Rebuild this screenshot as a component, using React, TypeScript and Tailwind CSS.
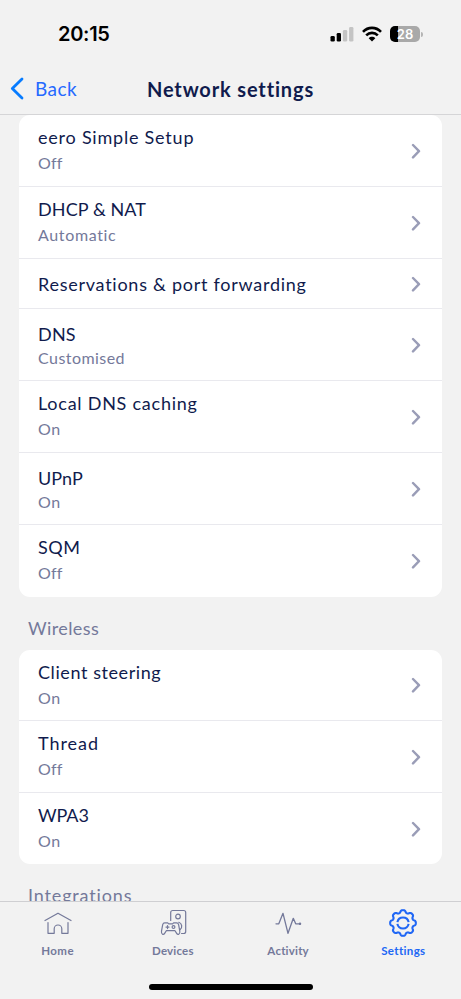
import type { ReactNode } from "react"
import { clsx } from "clsx"

interface Setting {
  title: string
  value?: string
  titleClass: string
  valueClass?: string
  height: string
  tight?: boolean
}

const network: Setting[] = [
  { title: "eero Simple Setup", value: "Off", titleClass: "tracking-[0.78px]", valueClass: "tracking-[0.2px]", height: "h-[72px]" },
  { title: "DHCP & NAT", value: "Automatic", titleClass: "tracking-[0.1px]", valueClass: "tracking-[0.65px]", height: "h-[72px]" },
  { title: "Reservations & port forwarding", titleClass: "tracking-[0.74px]", height: "h-[50px]" },
  { title: "DNS", value: "Customised", titleClass: "tracking-[0.2px]", valueClass: "tracking-[0.45px]", height: "h-[72px]", tight: true },
  { title: "Local DNS caching", value: "On", titleClass: "tracking-[0.75px]", valueClass: "tracking-[0.5px]", height: "h-[72px]" },
  { title: "UPnP", value: "On", titleClass: "tracking-[0.1px]", valueClass: "tracking-[0.5px]", height: "h-[72px]", tight: true },
  { title: "SQM", value: "Off", titleClass: "tracking-[0.5px]", valueClass: "tracking-[0.2px]", height: "h-[72px]" },
]

const wireless: Setting[] = [
  { title: "Client steering", value: "On", titleClass: "tracking-[0.58px]", valueClass: "tracking-[0.5px]", height: "h-[71px]" },
  { title: "Thread", value: "Off", titleClass: "tracking-[0.95px]", valueClass: "tracking-[0.2px]", height: "h-[72px]" },
  { title: "WPA3", value: "On", titleClass: "tracking-[-0.1px]", valueClass: "tracking-[0.5px]", height: "h-[71px]" },
]

function Row({ item }: { item: Setting }) {
  return (
    <div className={clsx("flex items-center justify-between border-b border-[#e9e9ee] pl-[19px] pr-[21px] last:border-b-0", item.height)}>
      <div className={clsx("flex flex-col self-start whitespace-nowrap", item.tight ? "pt-[13px]" : item.value ? "pt-[10px]" : "pt-[13px]")}>
        <span className={clsx("text-[18px] leading-6 text-[#101b4d]", item.titleClass)}>{item.title}</span>
        {item.value && (
          <span className={clsx("text-[16px] text-[#74799a]", item.tight ? "leading-[23px]" : "mt-0.5 leading-6", item.valueClass)}>
            {item.value}
          </span>
        )}
      </div>
      <svg width="10" height="16" viewBox="0 0 10 16" fill="none" stroke="#9a9db7" strokeWidth="2.4" strokeLinecap="round" strokeLinejoin="round">
        <path d="M2 2l6 6.200-6 6.200" />
      </svg>
    </div>
  )
}

function Card({ items }: { items: Setting[] }) {
  return (
    <div className="mx-[19px] overflow-hidden rounded-[11px] bg-white">
      {items.map((item) => (
        <Row key={item.title} item={item} />
      ))}
    </div>
  )
}

function StatusBar() {
  return (
    <div className="flex h-[64px] items-start justify-between pl-[58px] pr-[38px] pt-[22px]">
      <span className="font-['Inter',sans-serif] text-[20px] font-semibold leading-[25px] tracking-[-0.3px] text-black">20:15</span>
      <div className="flex h-6 items-center">
        <svg width="24" height="16" viewBox="0 0 24 16">
          <rect x="0.5" y="10" width="4.3" height="5.5" rx="1.3" fill="#000" />
          <rect x="6.7" y="7" width="4.3" height="8.5" rx="1.3" fill="#000" />
          <rect x="12.9" y="4" width="4.3" height="11.5" rx="1.3" fill="#c4c4c4" />
          <rect x="19.1" y="1" width="4.3" height="14.5" rx="1.3" fill="#c4c4c4" />
        </svg>
        <svg className="ml-2" width="20" height="16" viewBox="0 0 20 16" fill="none" stroke="#000" strokeWidth="2.6">
          <path d="M1 5.800C6 .600 14 .600 19 5.800" />
          <path d="M4.200 9.300C7.500 6 12.500 6 15.800 9.300" />
          <path d="M6.700 12.200c1.900-1.900 4.700-1.900 6.600 0L10 15.400z" fill="#000" stroke="none" />
        </svg>
        <div className="ml-2 flex items-center">
          <div className="flex h-4 w-[30px] items-center justify-center rounded-[5px] bg-linear-to-r from-black from-28% to-[#a9a9a9] to-28% font-['Inter',sans-serif] text-[13px] font-semibold leading-4 text-white">
            28
          </div>
          <div className="ml-px h-[5px] w-[2px] rounded-r-full bg-[#b5b5b5]" />
        </div>
      </div>
    </div>
  )
}

function HomeIcon() {
  return (
    <svg width="28" height="28" viewBox="0 0 28 28" fill="none" stroke="currentColor" strokeWidth="1.2" strokeLinecap="round" strokeLinejoin="round">
      <path d="M1 11.500L14 4.200l13 7.300" />
      <path d="M4 13.500V24.300h6.200v-4.500a3.800 3.800 0 0 1 7.600 0v4.500H24V13.500" />
    </svg>
  )
}

function DevicesIcon() {
  return (
    <svg width="28" height="28" viewBox="0 0 28 28" fill="none" stroke="currentColor" strokeWidth="1.2" strokeLinecap="round" strokeLinejoin="round">
      <path d="M11.700 11.500V3.500a2 2 0 0 1 2-2h11a2 2 0 0 1 2 2v19a2 2 0 0 1-2 2h-2.200" />
      <circle cx="19" cy="7.500" r="2.300" />
      <path d="M19.800 13.300a4.200 4.200 0 0 1 1.200 7.400" />
      <path d="M5.700 13.900h3l1 1h3.900l1-1h3c1.200 0 1.700.7 2 1.800l1.200 6.500c.5 3.300-2 4.100-3.300 1.900l-1.500-2.400H7.300l-1.500 2.400c-1.300 2.200-3.800 1.400-3.300-1.900l1.200-6.500c.3-1.100.8-1.800 2-1.800z" />
      <path d="M8.500 16.600v3M7 18.100h3" />
      <circle cx="14.500" cy="18.100" r="1.400" />
    </svg>
  )
}

function ActivityIcon() {
  return (
    <svg width="28" height="28" viewBox="0 0 28 28" fill="none" stroke="currentColor" strokeWidth="1.3" strokeLinecap="round" strokeLinejoin="round">
      <path d="M2 14.800h2.800L9 4.300l5 20L19.300 9.300l2.400 5.500H26" />
      <circle cx="26" cy="14.800" r="0.600" fill="currentColor" />
    </svg>
  )
}

// eight rounded teeth around the centre of a 28px box
const gearPoints = Array.from({ length: 192 }, (_, i) => {
  const angle = (i / 192) * Math.PI * 2
  const radius = 11.55 + 1.35 * Math.tanh(1.5 * Math.cos(angle * 8) + 0.3)
  return `${(14 + radius * Math.cos(angle)).toFixed(2)},${(14 + radius * Math.sin(angle)).toFixed(2)}`
}).join(" ")

function SettingsIcon() {
  return (
    <svg width="28" height="28" viewBox="0 0 28 28" fill="none" stroke="currentColor" strokeWidth="2.100" strokeLinecap="round" strokeLinejoin="round">
      <polygon points={gearPoints} />
      <path strokeLinecap="butt" d="M8.400 13.100a5.700 5.700 0 0 1 11.200 0M8.400 14.900a5.700 5.700 0 0 0 11.200 0" />
    </svg>
  )
}

function Tab({ label, active, className, children }: { label: string; active?: boolean; className: string; children: ReactNode }) {
  return (
    <div className={clsx("flex flex-1 flex-col items-center pt-[7px]", active ? "text-[#2067f5]" : "text-[#74799a]")}>
      {children}
      <span className={clsx("mt-[6px] text-[11.5px] font-bold leading-4", className)}>{label}</span>
    </div>
  )
}

export default function App() {
  return (
    <div className="flex h-[999px] w-[461px] flex-col overflow-hidden bg-[#f2f2f2] font-['Lato','Open_Sans',sans-serif]">
      <header className="h-[115px] shrink-0 border-b border-[#d5d5d7]">
        <StatusBar />
        <div className="grid h-[49px] grid-cols-[1fr_auto_1fr] items-center">
          <div className="flex items-center pl-[10px] text-[#2569ff]">
            <svg width="14" height="23" viewBox="0 0 14 23" fill="none" stroke="#087cff" strokeWidth="2.800" strokeLinecap="round" strokeLinejoin="round">
              <path d="M12 2L2.300 11.500 12 21" />
            </svg>
            <span className="ml-[11px] text-[19px] leading-6 tracking-[0.45px]">Back</span>
          </div>
          <h1 className="text-[20px] font-bold leading-6 tracking-[0.85px] text-[#101b4d]">Network settings</h1>
        </div>
      </header>

      <main className="min-h-0 flex-1 overflow-hidden">
        <Card items={network} />
        <h2 className="pl-[28px] pt-[19px] text-[18px] leading-6 tracking-[0.4px] text-[#74799a]">Wireless</h2>
        <div className="h-[10px]" />
        <Card items={wireless} />
        <h2 className="pl-[28px] pt-[19px] text-[18px] leading-6 tracking-[0.85px] text-[#74799a]">Integrations</h2>
      </main>

      <nav className="flex h-[98px] shrink-0 flex-col items-center border-t border-[#cfcfd2]">
        <div className="flex w-full">
          <Tab label="Home" className="tracking-[0.4px]">
            <HomeIcon />
          </Tab>
          <Tab label="Devices" className="tracking-[0.2px]">
            <DevicesIcon />
          </Tab>
          <Tab label="Activity" className="tracking-[0.2px]">
            <ActivityIcon />
          </Tab>
          <Tab label="Settings" active className="tracking-[0.35px]">
            <SettingsIcon />
          </Tab>
        </div>
        <div className="mb-[9px] mt-auto h-[6px] w-[164px] rounded-full bg-black" />
      </nav>
    </div>
  )
}
